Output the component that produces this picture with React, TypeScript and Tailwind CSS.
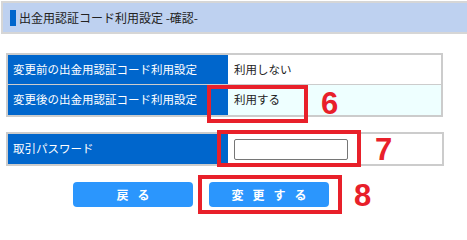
import React from "react";

/* ============================================
   Confirm table row
============================================ */

function Row({
  label,
  children,
  tint,
  last,
}: {
  label: string;
  children: React.ReactNode;
  tint?: boolean;
  last?: boolean;
}) {
  return (
    <div
      className={`flex h-[30px] ${last ? "" : "border-b border-[#cccccc]"}`}
    >
      <div className="w-[220px] bg-[#0066cc] text-white pl-[5px] flex items-center">
        {label}
      </div>
      <div
        className={`flex-1 flex items-center pl-[6px] text-[#222] ${
          tint ? "bg-[#eeffff]" : "bg-white"
        }`}
      >
        {children}
      </div>
    </div>
  );
}

function Mark({ n, className }: { n: string; className: string }) {
  return (
    <span
      className={`absolute text-[31px] leading-none font-bold text-[#e8202a] ${className}`}
      style={{ fontFamily: '"Liberation Sans", Arial, sans-serif' }}
    >
      {n}
    </span>
  );
}

/* ============================================
   App Root
============================================ */

export default function App() {
  return (
    <div
      className="relative w-[467px] h-[240px] bg-white text-[11.5px] overflow-hidden"
      style={{ fontFamily: '"Noto Sans CJK JP", "Noto Sans", sans-serif' }}
    >
      {/* header */}
      <div className="ml-[1px] mt-[1px] h-[33px] border-2 border-r-0 border-[#d6d6d6] bg-[#bed1f0] flex items-center pl-[7px]">
        <span className="w-[6px] h-[16px] bg-[#0066cc] mr-[3px]" />
        <span className="text-[12px] text-[#222]">
          出金用認証コード利用設定 -確認-
        </span>
      </div>

      {/* before / after */}
      <div className="ml-[6px] mt-[19px] w-[437px] border-2 border-[#cccccc]">
        <Row label="変更前の出金用認証コード利用設定">利用しない</Row>
        <Row label="変更後の出金用認証コード利用設定" tint last>
          利用する
        </Row>
      </div>

      {/* password */}
      <div className="ml-[6px] mt-[15px] w-[438px] border-2 border-[#cccccc]">
        <Row label="取引パスワード" last>
          <input
            type="password"
            className="w-[114px] h-[21px] border border-[#767676] rounded-[2px] bg-white outline-none"
          />
        </Row>
      </div>

      {/* buttons */}
      <div className="flex gap-[16px] ml-[73px] mt-[16px]">
        <button className="w-[120px] h-[25px] rounded-[4px] bg-[#2b96fd] text-white font-bold text-[12px] tracking-[9px] pl-[9px]">
          戻る
        </button>
        <button className="w-[120px] h-[25px] rounded-[4px] bg-[#2b96fd] text-white font-bold text-[12px] tracking-[9px] pl-[9px]">
          変更する
        </button>
      </div>

      {/* annotations */}
      <div className="absolute left-[207px] top-[85px] w-[101px] h-[38px] border-4 border-[#e8202a]" />
      <Mark n="6" className="left-[321px] top-[88px]" />
      <div className="absolute left-[217px] top-[130px] w-[144px] h-[37px] border-4 border-[#e8202a]" />
      <Mark n="7" className="left-[375px] top-[134px]" />
      <div className="absolute left-[198px] top-[175px] w-[144px] h-[39px] border-4 border-[#e8202a]" />
      <Mark n="8" className="left-[354px] top-[180px]" />
    </div>
  );
}
